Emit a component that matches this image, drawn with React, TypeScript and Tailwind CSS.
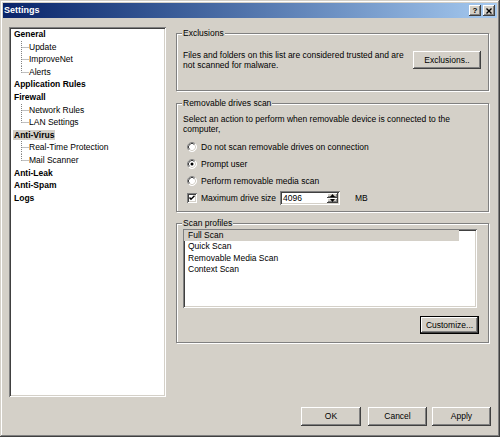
import React from "react";

const raised =
  "shadow-[inset_-1px_-1px_0_#404040,inset_1px_1px_0_#ffffff,inset_-2px_-2px_0_#808080,inset_2px_2px_0_#d4d0c8]";

function Btn({ label, w, h, cls = "" }: { label: string; w: string; h: string; cls?: string }) {
  return (
    <div
      className={`flex items-center justify-center bg-[#d4d0c8] text-black shadow-[inset_-1px_-1px_0_#404040,inset_1px_1px_0_#ffffff,inset_-2px_-2px_0_#808080,inset_2px_2px_0_#d4d0c8] ${w} ${h} ${cls}`}
    >
      {label}
    </div>
  );
}

function Radio({ checked }: { checked?: boolean }) {
  return (
    <svg width="10" height="10" viewBox="0 0 10 10" className="shrink-0">
      <circle cx="5" cy="5" r="4.5" fill="#ffffff" />
      <path d="M1.8 8.2 A4.5 4.5 0 0 1 8.2 1.8" stroke="#808080" strokeWidth="1" fill="none" />
      <path d="M8.2 1.8 A4.5 4.5 0 0 1 1.8 8.2" stroke="#ffffff" strokeWidth="1" fill="none" />
      <path d="M2.5 7.5 A3.5 3.5 0 0 1 7.5 2.5" stroke="#404040" strokeWidth="1" fill="none" />
      <path d="M7.5 2.5 A3.5 3.5 0 0 1 2.5 7.5" stroke="#d4d0c8" strokeWidth="1" fill="none" />
      {checked && <circle cx="5" cy="5" r="1.5" fill="#000000" />}
    </svg>
  );
}

function Check() {
  return (
    <div className="relative w-[10px] h-[10px] shrink-0 bg-white shadow-[inset_1px_1px_0_#808080,inset_-1px_-1px_0_#ffffff,inset_2px_2px_0_#404040,inset_-2px_-2px_0_#d4d0c8]">
      <svg width="10" height="10" viewBox="0 0 10 10" className="absolute left-0 top-0">
        <path d="M2.5 4.5 L4 6.2 L7.5 2.8" stroke="#000" strokeWidth="1.4" fill="none" />
      </svg>
    </div>
  );
}

function Group({
  label,
  h,
  children,
  cls = "",
}: {
  label: string;
  h: string;
  children: React.ReactNode;
  cls?: string;
}) {
  return (
    <div
      className={`relative border border-[#808080] shadow-[inset_1px_1px_0_#ffffff,1px_1px_0_#ffffff] ${h} ${cls}`}
    >
      <span className="absolute left-[5px] top-[-6px] bg-[#d4d0c8] px-[1px] leading-[11px] text-black">
        {label}
      </span>
      {children}
    </div>
  );
}

function Branch({ last }: { last?: boolean }) {
  return (
    <svg width="8" height="12.6" viewBox="0 0 8 12.6" className="shrink-0">
      <line x1="0.5" y1="0" x2="0.5" y2={last ? 6.5 : 12.6} stroke="#808080" strokeDasharray="1 1" />
      <line x1="0.5" y1="6.5" x2="8" y2="6.5" stroke="#808080" strokeDasharray="1 1" />
    </svg>
  );
}

type Node = { label: string; children?: string[]; selected?: boolean };

const tree: Node[] = [
  { label: "General", children: ["Update", "ImproveNet", "Alerts"] },
  { label: "Application Rules" },
  { label: "Firewall", children: ["Network Rules", "LAN Settings"] },
  { label: "Anti-Virus", children: ["Real-Time Protection", "Mail Scanner"], selected: true },
  { label: "Anti-Leak" },
  { label: "Anti-Spam" },
  { label: "Logs" },
];

export default function App() {
  return (
    <div className="w-[500px] h-[437px] bg-[#d4d0c8] p-[3px] flex flex-col text-[8.5px] text-black font-['Liberation_Sans',Arial,sans-serif] shadow-[inset_-1px_-1px_0_#404040,inset_1px_1px_0_#d4d0c8,inset_-2px_-2px_0_#808080,inset_2px_2px_0_#ffffff]">
      {/* Title bar */}
      <div className="h-[15px] flex items-center justify-between bg-linear-to-r from-[#0a246a] to-[#a6caf0] pl-[1px] pr-[2px]">
        <span className="text-white font-bold text-[9px] leading-[15px]">Settings</span>
        <div className="flex gap-[2px]">
          <div className={`w-[12px] h-[11px] bg-[#d4d0c8] flex items-center justify-center font-bold text-[8px] leading-none ${raised}`}>
            ?
          </div>
          <div className={`w-[12px] h-[11px] bg-[#d4d0c8] flex items-center justify-center ${raised}`}>
            <svg width="6" height="6" viewBox="0 0 6 6">
              <path d="M0.5 0.5 L5.5 5.5 M5.5 0.5 L0.5 5.5" stroke="#000" strokeWidth="1.4" />
            </svg>
          </div>
        </div>
      </div>

      <div className="flex pt-[9px] pl-[6px]">
        {/* Tree */}
        <div className="w-[157px] h-[370px] shrink-0 bg-white pt-[1px] pl-[5px] shadow-[inset_1px_1px_0_#808080,inset_-1px_-1px_0_#ffffff,inset_2px_2px_0_#404040,inset_-2px_-2px_0_#d4d0c8]">
          {tree.map((n) => (
            <div key={n.label}>
              <div className="h-[12.6px] leading-[12.6px] font-bold whitespace-nowrap">
                <span className={n.selected ? "bg-[#d4d0c8] px-[1px] -ml-[1px]" : ""}>{n.label}</span>
              </div>
              {n.children?.map((c, i) => (
                <div key={c} className="h-[12.6px] leading-[12.6px] flex items-center pl-[7px] whitespace-nowrap">
                  <Branch last={i === n.children!.length - 1} />
                  <span>{c}</span>
                </div>
              ))}
            </div>
          ))}
        </div>

        {/* Right column */}
        <div className="ml-[10px] w-[313px] flex flex-col">
          <Group label="Exclusions" h="h-[58px]" cls="mt-[6px]">
            <div className="flex items-start pt-[16px] pl-[6px] pr-[7px]">
              <div className="leading-[10px] whitespace-nowrap">
                Files and folders on this list are considered trusted and are
                <br />
                not scanned for malware.
              </div>
              <Btn label="Exclusions.." w="w-[68px]" h="h-[18px]" cls="ml-auto mt-[1px]" />
            </div>
          </Group>

          <Group label="Removable drives scan" h="h-[109px]" cls="mt-[12px]">
            <div className="flex flex-col pt-[11px] pl-[6px]">
              <div className="leading-[9.5px] whitespace-nowrap">
                Select an action to perform when removable device is connected to the
                <br />
                computer,
              </div>
              <div className="mt-[4.5px] flex flex-col pl-[4px]">
                <div className="h-[17px] flex items-center gap-[4px]">
                  <Radio />
                  <span>Do not scan removable drives on connection</span>
                </div>
                <div className="h-[17px] flex items-center gap-[4px]">
                  <Radio checked />
                  <span>Prompt user</span>
                </div>
                <div className="h-[17px] flex items-center gap-[4px]">
                  <Radio />
                  <span>Perform removable media scan</span>
                </div>
                <div className="h-[17px] flex items-center">
                  <Check />
                  <span className="ml-[4px] w-[79px]">Maximum drive size</span>
                  <div className="relative w-[60px] h-[14px] bg-white flex items-center pl-[3px] shadow-[inset_1px_1px_0_#808080,inset_-1px_-1px_0_#ffffff,inset_2px_2px_0_#404040,inset_-2px_-2px_0_#d4d0c8]">
                    <span>4096</span>
                    <div className="absolute right-[2px] top-[2px] bottom-[2px] w-[11px] flex flex-col">
                      <div className={`flex-1 bg-[#d4d0c8] flex items-center justify-center ${raised}`}>
                        <svg width="5" height="3" viewBox="0 0 5 3">
                          <path d="M0 3 L2.5 0 L5 3 Z" fill="#000" />
                        </svg>
                      </div>
                      <div className={`flex-1 bg-[#d4d0c8] flex items-center justify-center ${raised}`}>
                        <svg width="5" height="3" viewBox="0 0 5 3">
                          <path d="M0 0 L2.5 3 L5 0 Z" fill="#000" />
                        </svg>
                      </div>
                    </div>
                  </div>
                  <span className="ml-[15px]">MB</span>
                </div>
              </div>
            </div>
          </Group>

          <Group label="Scan profiles" h="h-[120px]" cls="mt-[11px]">
            <div className="flex flex-col pt-[5px] pl-[6px]">
              <div className="w-[294px] h-[79px] bg-white pt-[1px] pl-[1px] shadow-[inset_1px_1px_0_#808080,inset_-1px_-1px_0_#ffffff,inset_2px_2px_0_#404040,inset_-2px_-2px_0_#d4d0c8]">
                <div className="w-[275px] h-[11.4px] leading-[11.4px] pl-[4px] bg-[#d4d0c8]">Full Scan</div>
                <div className="h-[11.4px] leading-[11.4px] pl-[4px]">Quick Scan</div>
                <div className="h-[11.4px] leading-[11.4px] pl-[4px]">Removable Media Scan</div>
                <div className="h-[11.4px] leading-[11.4px] pl-[4px]">Context Scan</div>
              </div>
              <div className="self-end mr-[9px] mt-[8px] border border-black">
                <Btn label="Customize..." w="w-[57px]" h="h-[16px]" />
              </div>
            </div>
          </Group>
        </div>
      </div>

      <div className="flex justify-end pr-[6px] mt-[10px]">
        <Btn label="OK" w="w-[60px]" h="h-[19px]" />
        <Btn label="Cancel" w="w-[59px]" h="h-[19px]" cls="ml-[7px]" />
        <Btn label="Apply" w="w-[59px]" h="h-[19px]" cls="ml-[5px]" />
      </div>
    </div>
  );
}
